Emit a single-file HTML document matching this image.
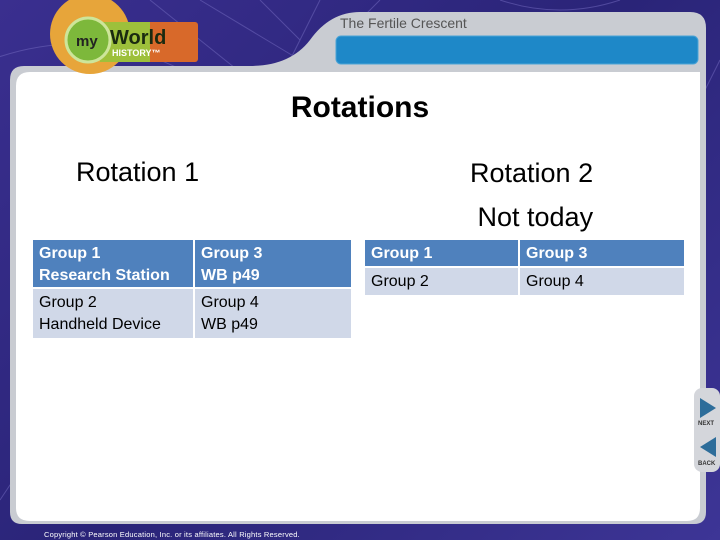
<!DOCTYPE html>
<html><head><style>
body{margin:0;width:720px;height:540px;overflow:hidden;background:linear-gradient(135deg,#3a2f8f,#2a2478 50%,#3d3596);font-family:"Liberation Sans",sans-serif;position:relative}
.abs{position:absolute}
td{padding:3px 6px 0;font-size:16px;line-height:22px;vertical-align:top}
</style></head><body>
<svg class="abs" style="left:0;top:0" width="720" height="540">
<g stroke="#6a63b8" stroke-width="1" fill="none" opacity="0.6">
<path d="M150 0 L250 80 M200 0 L300 60 M260 0 L300 40 M320 0 L290 60 M380 0 L340 40 M-10 60 Q100 20 200 80 M500 0 Q560 20 620 0 M0 500 L40 440 M700 100 L720 60"/>
</g>
<path d="M10 80 Q10 66 24 66 L250 66 Q290 66 310 40 Q330 12 360 12 L690 12 Q706 12 706 28 L706 512 Q706 524 694 524 L22 524 Q10 524 10 512 Z" fill="#c9ccd2"/>
<path d="M16 86 Q16 72 30 72 L700 72 L700 508 Q700 521 687 521 L30 521 Q16 521 16 508 Z" fill="#fff"/>
<rect x="336" y="36" width="362" height="28" rx="5" fill="#1e88c8" stroke="#4aa3d6"/>
<circle cx="90" cy="34" r="40" fill="#e7a53a"/>
<rect x="100" y="22" width="98" height="40" rx="3" fill="#d8692a"/>
<rect x="100" y="22" width="50" height="40" fill="#9dc03b"/>
<circle cx="88" cy="40" r="22" fill="#7db83b" stroke="#cde59a" stroke-width="3"/>
<text x="76" y="46" font-size="15" font-weight="bold" fill="#222" font-family="Liberation Sans">my</text>
<text x="110" y="44" font-size="20" font-weight="bold" fill="#1a2a10" font-family="Liberation Sans">World</text>
<text x="112" y="56" font-size="9" font-weight="bold" fill="#fff" font-family="Liberation Sans">HISTORY™</text>
<rect x="694" y="388" width="26" height="84" rx="8" fill="#d4d6db"/>
<path d="M700 398 L716 408 L700 418 Z" fill="#2d6d9a"/>
<path d="M716 437 L700 447 L716 457 Z" fill="#2d6d9a"/>
<text x="698" y="425" font-size="6" font-weight="bold" fill="#333">NEXT</text>
<text x="698" y="465" font-size="6" font-weight="bold" fill="#333">BACK</text>
</svg>
<div class="abs" style="left:340px;top:15px;font-size:14px;color:#555">The Fertile Crescent</div>
<div class="abs" style="left:0;width:720px;top:91px;text-align:center;font-size:30px;font-weight:bold">Rotations</div>
<div class="abs" style="left:76px;top:157px;font-size:27px">Rotation 1</div>
<div class="abs" style="left:470px;top:151px;font-size:27px;line-height:44px">Rotation 2<br>&nbsp;Not today</div>
<table class="abs" style="left:31px;top:238px;border-collapse:separate;border-spacing:2px;width:322px">
<tr style="background:#4f81bd;color:#fff;font-weight:bold;height:47px"><td style="width:148px">Group 1<br>Research Station</td><td>Group 3<br>WB p49</td></tr>
<tr style="background:#d0d8e8;height:49px"><td>Group 2<br>Handheld Device</td><td>Group 4<br>WB p49</td></tr>
</table>
<table class="abs" style="left:363px;top:238px;border-collapse:separate;border-spacing:2px;width:323px">
<tr style="background:#4f81bd;color:#fff;font-weight:bold;height:26px"><td style="width:141px;padding-top:3px">Group 1</td><td style="padding-top:3px">Group 3</td></tr>
<tr style="background:#d0d8e8;height:27px"><td style="padding-top:3px">Group 2</td><td style="padding-top:3px">Group 4</td></tr>
</table>
<div class="abs" style="left:44px;top:530px;font-size:7.5px;color:#fff;letter-spacing:0.2px">Copyright © Pearson Education, Inc. or its affiliates. All Rights Reserved.</div>
</body></html>
